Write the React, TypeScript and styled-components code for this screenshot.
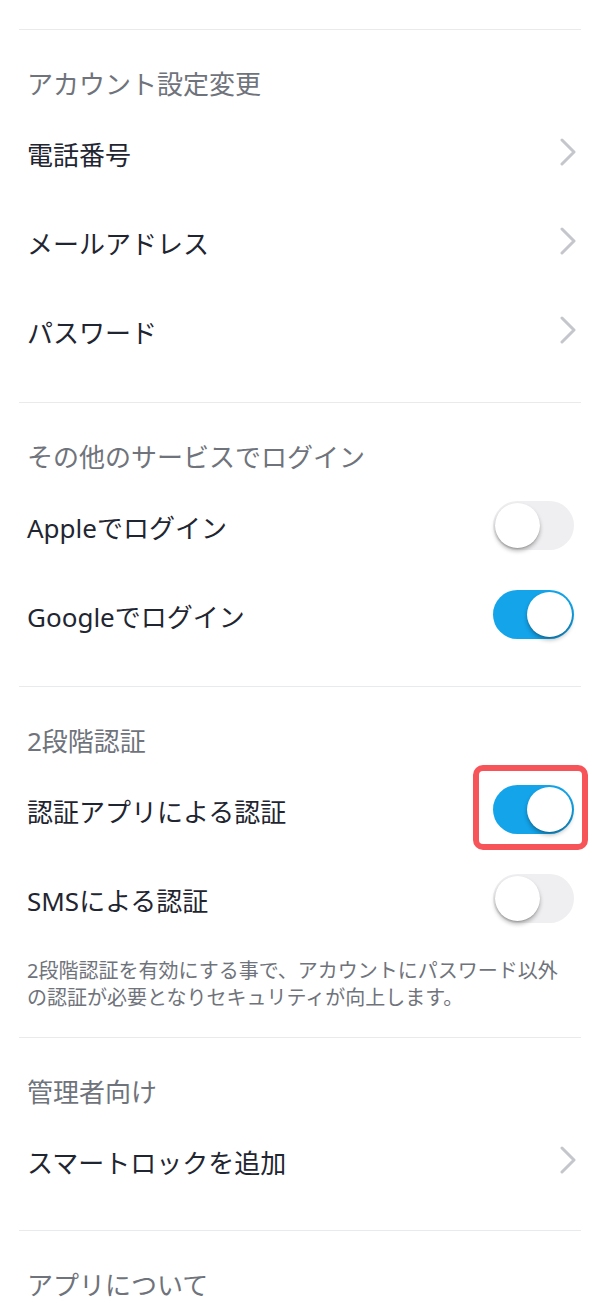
import React from "react";
import styled, { createGlobalStyle } from "styled-components";

const GlobalStyle = createGlobalStyle`
  html, body {
    margin: 0;
    padding: 0;
    background: #ffffff;
  }
  body {
    font-family: "Noto Sans", "Noto Sans CJK JP", sans-serif;
    -webkit-font-smoothing: antialiased;
  }
`;

const Page = styled.div`
  width: 600px;
  padding-top: 29px;
  background: #ffffff;
`;

const Divider = styled.div`
  height: 1px;
  margin: 0 19px;
  background: #e9eaec;
`;

const Section = styled.section<{ $pb?: number }>`
  padding: 0 24px ${(p) => p.$pb ?? 25}px 27px;
`;

const SectionTitle = styled.h2`
  margin: 0;
  box-sizing: border-box;
  height: 80px;
  padding-top: 40px;
  font-size: 26px;
  line-height: 28px;
  font-weight: 400;
  color: #6f737b;
`;

const Row = styled.div`
  height: 89px;
  display: flex;
  align-items: center;
  justify-content: space-between;
`;

const RowLabel = styled.span`
  font-size: 26px;
  line-height: 30px;
  font-weight: 400;
  color: #1f2631;
`;

const Description = styled.p`
  margin: 12px 0 1px;
  font-size: 20px;
  line-height: 27px;
  color: #6f737b;
`;

const ChevronWrap = styled.span`
  display: flex;
  width: 16px;
  height: 28px;
  margin-bottom: 6px;
`;

const Track = styled.span<{ $on: boolean }>`
  position: relative;
  display: flex;
  align-items: center;
  box-sizing: border-box;
  width: 81px;
  height: 49px;
  margin: 0 2px 5px 0;
  padding: 0 2px;
  border-radius: 25px;
  background: ${(p) => (p.$on ? "#13a4ea" : "#efeff1")};
  justify-content: ${(p) => (p.$on ? "flex-end" : "flex-start")};
`;

const Knob = styled.span`
  width: 45px;
  height: 45px;
  border-radius: 50%;
  background: #ffffff;
  box-shadow: 0 3px 4px rgba(0, 0, 0, 0.28), 0 1px 1px rgba(0, 0, 0, 0.12);
`;

const Highlight = styled.span`
  position: absolute;
  left: -20px;
  right: -14px;
  top: -20px;
  bottom: -16px;
  border: 6px solid #f7545a;
  border-radius: 10px;
  pointer-events: none;
`;

const Chevron = () => (
  <ChevronWrap>
    <svg width="16" height="28" viewBox="0 0 16 28" fill="none">
      <polyline
        points="2,2 14,14 2,26"
        stroke="#c4c6cb"
        strokeWidth="3"
        strokeLinecap="round"
        strokeLinejoin="round"
      />
    </svg>
  </ChevronWrap>
);

const Toggle = ({ on, highlighted }: { on: boolean; highlighted?: boolean }) => (
  <Track $on={on}>
    <Knob />
    {highlighted && <Highlight />}
  </Track>
);

type Item =
  | { label: string; kind: "link" }
  | { label: string; kind: "toggle"; on: boolean; highlighted?: boolean };

const sections: { title: string; items: Item[]; note?: string; pb?: number }[] = [
  {
    title: "アカウント設定変更",
    items: [
      { label: "電話番号", kind: "link" },
      { label: "メールアドレス", kind: "link" },
      { label: "パスワード", kind: "link" },
    ],
  },
  {
    title: "その他のサービスでログイン",
    items: [
      { label: "Appleでログイン", kind: "toggle", on: false },
      { label: "Googleでログイン", kind: "toggle", on: true },
    ],
  },
  {
    title: "2段階認証",
    items: [
      { label: "認証アプリによる認証", kind: "toggle", on: true, highlighted: true },
      { label: "SMSによる認証", kind: "toggle", on: false },
    ],
    note: "2段階認証を有効にする事で、アカウントにパスワード以外の認証が必要となりセキュリティが向上します。",
  },
  {
    title: "管理者向け",
    items: [{ label: "スマートロックを追加", kind: "link" }],
    pb: 23,
  },
  {
    title: "アプリについて",
    items: [],
  },
];

export default function App() {
  return (
    <>
      <GlobalStyle />
      <Page>
        {sections.map((s) => (
          <React.Fragment key={s.title}>
            <Divider />
            <Section $pb={s.pb}>
              <SectionTitle>{s.title}</SectionTitle>
              {s.items.map((it) => (
                <Row key={it.label}>
                  <RowLabel>{it.label}</RowLabel>
                  {it.kind === "link" ? (
                    <Chevron />
                  ) : (
                    <Toggle on={it.on} highlighted={it.highlighted} />
                  )}
                </Row>
              ))}
              {s.note && <Description>{s.note}</Description>}
            </Section>
          </React.Fragment>
        ))}
      </Page>
    </>
  );
}
